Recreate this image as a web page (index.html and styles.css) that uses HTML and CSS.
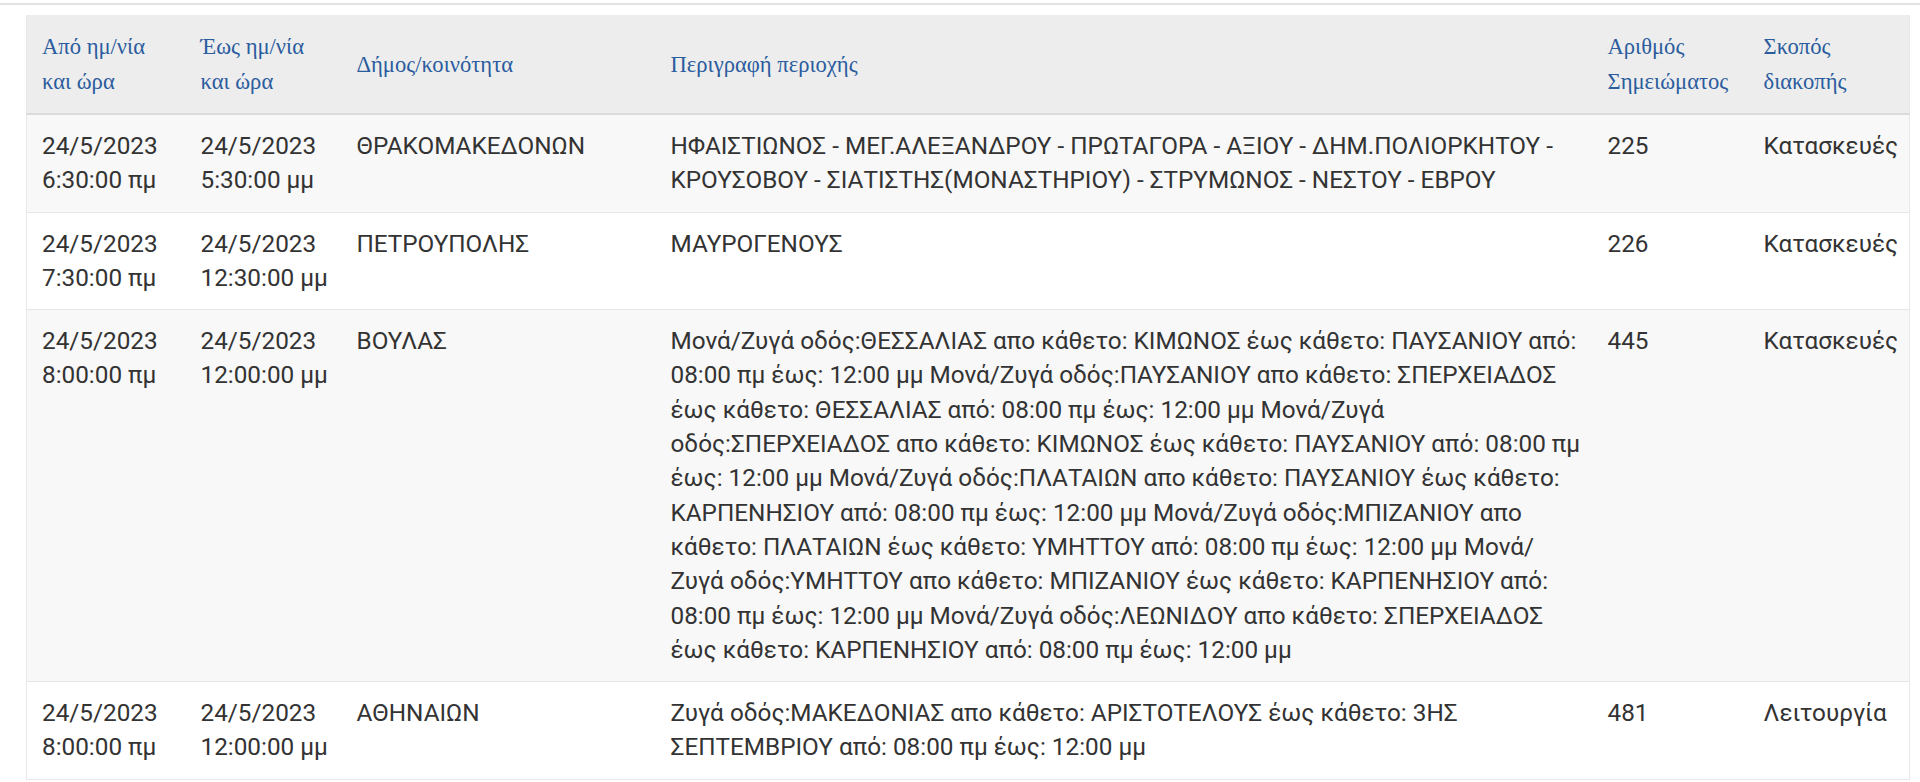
FILE: index.html
```html
<!DOCTYPE html>
<html lang="el">
<head>
  <meta charset="UTF-8">
  <meta name="viewport" content="width=device-width, initial-scale=1.0">
  <title>Διακοπές νερού</title>
  <link rel="stylesheet" href="styles.css">
</head>
<body>
  <div class="page">
    <table class="cuts">
      <colgroup>
        <col class="c-from">
        <col class="c-to">
        <col class="c-area">
        <col class="c-desc">
        <col class="c-num">
        <col class="c-why">
      </colgroup>
      <thead>
        <tr>
          <th>Από ημ/νία και ώρα</th>
          <th>Έως ημ/νία και ώρα</th>
          <th>Δήμος/κοινότητα</th>
          <th>Περιγραφή περιοχής</th>
          <th>Αριθμός Σημειώματος</th>
          <th>Σκοπός διακοπής</th>
        </tr>
      </thead>
      <tbody>
        <tr>
          <td>24/5/2023 6:30:00 πμ</td>
          <td>24/5/2023 5:30:00 μμ</td>
          <td>ΘΡΑΚΟΜΑΚΕΔΟΝΩΝ</td>
          <td class="desc">ΗΦΑΙΣΤΙΩΝΟΣ - ΜΕΓ.ΑΛΕΞΑΝΔΡΟΥ - ΠΡΩΤΑΓΟΡΑ - ΑΞΙΟΥ - ΔΗΜ.ΠΟΛΙΟΡΚΗΤΟΥ - ΚΡΟΥΣΟΒΟΥ - ΣΙΑΤΙΣΤΗΣ(ΜΟΝΑΣΤΗΡΙΟΥ) - ΣΤΡΥΜΩΝΟΣ - ΝΕΣΤΟΥ - ΕΒΡΟΥ</td>
          <td>225</td>
          <td>Κατασκευές</td>
        </tr>
        <tr>
          <td>24/5/2023 7:30:00 πμ</td>
          <td>24/5/2023 12:30:00 μμ</td>
          <td>ΠΕΤΡΟΥΠΟΛΗΣ</td>
          <td class="desc">ΜΑΥΡΟΓΕΝΟΥΣ</td>
          <td>226</td>
          <td>Κατασκευές</td>
        </tr>
        <tr>
          <td>24/5/2023 8:00:00 πμ</td>
          <td>24/5/2023 12:00:00 μμ</td>
          <td>ΒΟΥΛΑΣ</td>
          <td class="desc">Μονά/Ζυγά οδός:ΘΕΣΣΑΛΙΑΣ απο κάθετο: ΚΙΜΩΝΟΣ έως κάθετο: ΠΑΥΣΑΝΙΟΥ από: 08:00 πμ έως: 12:00 μμ Μονά/Ζυγά οδός:ΠΑΥΣΑΝΙΟΥ απο κάθετο: ΣΠΕΡΧΕΙΑΔΟΣ έως κάθετο: ΘΕΣΣΑΛΙΑΣ από: 08:00 πμ έως: 12:00 μμ Μονά/Ζυγά οδός:ΣΠΕΡΧΕΙΑΔΟΣ απο κάθετο: ΚΙΜΩΝΟΣ έως κάθετο: ΠΑΥΣΑΝΙΟΥ από: 08:00 πμ έως: 12:00 μμ Μονά/Ζυγά οδός:ΠΛΑΤΑΙΩΝ απο κάθετο: ΠΑΥΣΑΝΙΟΥ έως κάθετο: ΚΑΡΠΕΝΗΣΙΟΥ από: 08:00 πμ έως: 12:00 μμ Μονά/Ζυγά οδός:ΜΠΙΖΑΝΙΟΥ απο κάθετο: ΠΛΑΤΑΙΩΝ έως κάθετο: ΥΜΗΤΤΟΥ από: 08:00 πμ έως: 12:00 μμ Μονά/Ζυγά οδός:ΥΜΗΤΤΟΥ απο κάθετο: ΜΠΙΖΑΝΙΟΥ έως κάθετο: ΚΑΡΠΕΝΗΣΙΟΥ από: 08:00 πμ έως: 12:00 μμ Μονά/Ζυγά οδός:ΛΕΩΝΙΔΟΥ απο κάθετο: ΣΠΕΡΧΕΙΑΔΟΣ έως κάθετο: ΚΑΡΠΕΝΗΣΙΟΥ από: 08:00 πμ έως: 12:00 μμ</td>
          <td>445</td>
          <td>Κατασκευές</td>
        </tr>
        <tr>
          <td>24/5/2023 8:00:00 πμ</td>
          <td>24/5/2023 12:00:00 μμ</td>
          <td>ΑΘΗΝΑΙΩΝ</td>
          <td class="desc">Ζυγά οδός:ΜΑΚΕΔΟΝΙΑΣ απο κάθετο: ΑΡΙΣΤΟΤΕΛΟΥΣ έως κάθετο: 3ΗΣ ΣΕΠΤΕΜΒΡΙΟΥ από: 08:00 πμ έως: 12:00 μμ</td>
          <td>481</td>
          <td>Λειτουργία</td>
        </tr>
      </tbody>
    </table>
  </div>
</body>
</html>
```

FILE: styles.css
```css
body {
  margin: 0;
  padding: 0;
  background-color: #fff;
  color: #333;
  font-family: Roboto, "Liberation Sans", Arial, sans-serif;
}
.page {
  margin-top: 3px;
  border-top: 2px solid #e2e2e2;
  padding: 10px 11px 0 26px;
}
.cuts {
  width: 1883px;
  table-layout: fixed;
  border-collapse: collapse;
  border: 1px solid #e8e8e8;
  border-top: 0;
}
.c-from { width: 159px; }
.c-to { width: 156px; }
.c-area { width: 314px; }
.c-desc { width: 937px; }
.c-num { width: 156px; }
.c-why { width: 161px; }
.cuts th {
  background-color: #ededed;
  color: #2b5c9e;
  font-family: "Liberation Serif", "Times New Roman", serif;
  font-size: 22.6px;
  font-weight: normal;
  line-height: 35px;
  text-align: left;
  vertical-align: middle;
  padding: 14px 14px 14px 15px;
  border-bottom: 2px solid #dcdcdc;
}
.cuts td {
  font-size: 24.3px;
  line-height: 34.3px;
  vertical-align: top;
  padding: 14px 12px 14px 15px;
  border-top: 1px solid #e6e6e6;
}
.cuts td.desc {
  padding-right: 9px;
}
.cuts tbody tr:nth-child(odd) {
  background-color: #f8f8f8;
}
.cuts tbody tr:first-child td {
  border-top: 0;
}
```
